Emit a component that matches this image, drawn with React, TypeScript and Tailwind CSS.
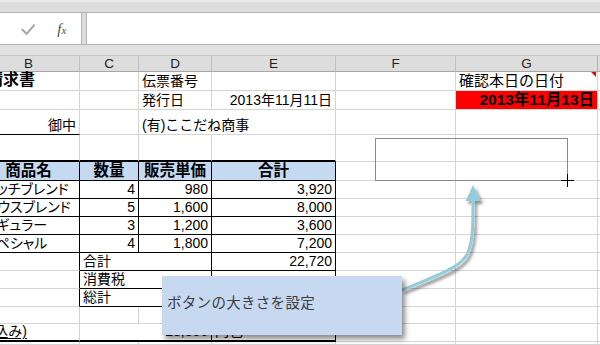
import type {ReactNode} from "react";

type Edge = "g" | "k" | "K" | "n";

const RIGHT: Record<Edge, string> = {
  g: "border-r border-r-[#d4d4d4]",
  k: "border-r border-r-black",
  K: "border-r-2 border-r-black",
  n: "border-r border-r-transparent"
};

const BOTTOM: Record<Edge, string> = {
  g: "border-b border-b-[#d4d4d4]",
  k: "border-b border-b-black",
  K: "border-b-2 border-b-black",
  n: "border-b border-b-transparent"
};

type CellProps = {
  children?: ReactNode;
  r?: Edge;
  b?: Edge;
  className?: string;
};

const Cell = ({children, r = "g", b = "g", className = ""}: CellProps) => (
  <div
    className={`flex min-w-0 items-end whitespace-nowrap px-[3px] pb-[2px] leading-none ${RIGHT[r]} ${BOTTOM[b]} ${className}`}
  >
    {children}
  </div>
);

const Toolbar = () => (
  <div>
    <div className="h-[13px] border-t-2 border-t-[#ebebeb] border-b border-b-[#b3b3b3] bg-[#dddddd]" />
    <div className="flex h-[31px] bg-[#dddddd]">
      <div className="flex w-[82px] items-center border-r border-r-[#b3b3b3] bg-white">
        <svg width="82" height="31" viewBox="0 0 82 31">
          <polyline
            points="22,16 27,21 35,11.5"
            fill="none"
            stroke="#a8a8a8"
            strokeWidth="2"
          />
          <text
            x="58"
            y="21"
            fontFamily="'Liberation Serif', serif"
            fontStyle="italic"
            fontSize="15"
            fill="#4a4a4a"
          >
            f
            <tspan fontSize="11" dy="0">
              x
            </tspan>
          </text>
        </svg>
      </div>
      <div className="w-[4px]" />
      <div className="flex-1 border-l border-l-[#b3b3b3] bg-white" />
    </div>
    <div className="h-[11px] border-t border-t-[#b3b3b3] bg-[#e2e2e2]" />
  </div>
);

const ColumnHeaders = () => (
  <div className="grid h-[17px] grid-cols-[80px_59px_73px_124px_120px_142px_2px] border-t border-t-[#c4c4c4] border-b border-b-[#a6a6a6] bg-[#dddddd] text-[13.5px] leading-none text-[#1e1e1e]">
    <div className="flex items-center justify-center border-r border-r-[#c2c2c2] pr-[22px]">B</div>
    <div className="flex items-center justify-center border-r border-r-[#c2c2c2]">C</div>
    <div className="flex items-center justify-center border-r border-r-[#c2c2c2]">D</div>
    <div className="flex items-center justify-center border-r border-r-[#c2c2c2]">E</div>
    <div className="flex items-center justify-center border-r border-r-[#c2c2c2]">F</div>
    <div className="flex items-center justify-center border-r border-r-[#b0b0b0]">G</div>
    <div />
  </div>
);

type Item = {name: string; qty: string; price: string; total: string};

const items: Item[] = [
  {name: "ダッチブレンド", qty: "4", price: "980", total: "3,920"},
  {name: "ハウスブレンド", qty: "5", price: "1,600", total: "8,000"},
  {name: "レギュラー", qty: "3", price: "1,200", total: "3,600"},
  {name: "スペシャル", qty: "4", price: "1,800", total: "7,200"}
];

const Sheet = () => (
  <div className="grid h-[273px] grid-cols-[80px_59px_73px_124px_120px_142px_2px] grid-rows-[19px_19px_25px_27px_19px_18px_18px_18px_18px_18px_18px_18px_17px_18px_1fr] text-[14px]">
    {/* row 1 */}
    <Cell className="font-bold text-[16px]">
      <span className="-ml-[16px]">請求書</span>
    </Cell>
    <Cell />
    <Cell>伝票番号</Cell>
    <Cell />
    <Cell />
    <Cell className="relative text-[15px]">
      確認本日の日付
      <span className="absolute right-[1px] top-0 h-0 w-0 border-l-[5px] border-l-transparent border-t-[5px] border-t-[#ff0000]" />
    </Cell>
    <Cell r="n" />

    {/* row 2 */}
    <Cell />
    <Cell />
    <Cell>発行日</Cell>
    <Cell className="justify-end">2013年11月11日</Cell>
    <Cell />
    <Cell className="justify-end bg-[#ff0000] text-[15.5px] font-bold">2013年11月13日</Cell>
    <Cell r="n" />

    {/* row 3 */}
    <Cell b="k" className="justify-end">
      御中
    </Cell>
    <Cell />
    <Cell r="n">(有)ここだね商事</Cell>
    <Cell />
    <Cell />
    <Cell />
    <Cell r="n" />

    {/* row 4 */}
    <Cell b="K" />
    <Cell b="K" />
    <Cell b="K" />
    <Cell b="K" />
    <Cell />
    <Cell />
    <Cell r="n" />

    {/* row 5: table header */}
    <Cell r="k" b="k" className="justify-center bg-[#c5d9f1] pr-[25px] text-[15.5px] font-bold">
      商品名
    </Cell>
    <Cell r="k" b="k" className="justify-center bg-[#c5d9f1] text-[15.5px] font-bold">
      数量
    </Cell>
    <Cell r="k" b="k" className="justify-center bg-[#c5d9f1] text-[15.5px] font-bold">
      販売単価
    </Cell>
    <Cell r="k" b="k" className="justify-center bg-[#c5d9f1] text-[15.5px] font-bold">
      合計
    </Cell>
    <Cell />
    <Cell />
    <Cell r="n" />

    {/* rows 6-9 */}
    {items.map((it) => [
      <Cell key={`${it.name}-b`} r="k" b="k">
        <span className="-ml-[19px] [font-feature-settings:'palt']">{it.name}</span>
      </Cell>,
      <Cell key={`${it.name}-c`} r="k" b="k" className="justify-end">
        {it.qty}
      </Cell>,
      <Cell key={`${it.name}-d`} r="k" b="k" className="justify-end">
        {it.price}
      </Cell>,
      <Cell key={`${it.name}-e`} r="k" b="k" className="justify-end">
        {it.total}
      </Cell>,
      <Cell key={`${it.name}-f`} />,
      <Cell key={`${it.name}-g`} />,
      <Cell key={`${it.name}-h`} r="n" />
    ])}

    {/* row 10 */}
    <Cell r="k" />
    <Cell r="k" b="k" className="col-span-2">
      合計
    </Cell>
    <Cell r="k" b="k" className="justify-end">
      22,720
    </Cell>
    <Cell />
    <Cell />
    <Cell r="n" />

    {/* row 11 */}
    <Cell r="k" />
    <Cell r="k" b="k" className="col-span-2">
      消費税
    </Cell>
    <Cell r="k" />
    <Cell />
    <Cell />
    <Cell r="n" />

    {/* row 12 */}
    <Cell r="k" />
    <Cell r="k" b="k" className="col-span-2">
      総計
    </Cell>
    <Cell r="k" />
    <Cell />
    <Cell />
    <Cell r="n" />

    {/* row 13 */}
    <Cell />
    <Cell />
    <Cell r="k" />
    <Cell r="k" />
    <Cell />
    <Cell />
    <Cell r="n" />

    {/* row 14 */}
    <Cell b="K" className="justify-end pr-[52px]">
      <span className="underline underline-offset-2">ご請求金額(税込み)</span>
    </Cell>
    <Cell r="k" b="K" className="col-span-2 justify-end">
      23,856
    </Cell>
    <Cell r="k" b="K">
      円也
    </Cell>
    <Cell />
    <Cell />
    <Cell r="n" />

    {/* row 15 */}
    <Cell />
    <Cell />
    <Cell />
    <Cell />
    <Cell />
    <Cell />
    <Cell r="n" />
  </div>
);

const Arrow = () => (
  <svg
    className="pointer-events-none absolute left-[390px] top-[178px]"
    width="110"
    height="125"
    viewBox="0 0 110 125"
  >
    <defs>
      <filter id="arrowShadow" x="-30%" y="-30%" width="160%" height="160%">
        <feDropShadow dx="2.5" dy="3" stdDeviation="1.6" floodColor="#000" floodOpacity="0.45" />
      </filter>
    </defs>
    <g filter="url(#arrowShadow)">
      <path
        d="M12,112 C45,98 72,90 78,74 C83,62 83,47 83,22"
        fill="none"
        stroke="#93cddd"
        strokeWidth="3"
      />
      <polygon points="83,7 75.5,23 90.5,23" fill="#93cddd" />
    </g>
  </svg>
);

export default function App() {
  return (
    <div className="relative h-[345px] w-[600px] overflow-hidden bg-white font-['Liberation_Sans','Noto_Sans_CJK_JP',sans-serif] text-black">
      <Toolbar />
      <ColumnHeaders />
      <Sheet />

      {/* drawn button outline */}
      <div className="pointer-events-none absolute left-[375px] top-[138px] h-[43px] w-[193px] border border-[#8a8a8a]" />
      {/* crosshair cursor */}
      <div className="pointer-events-none absolute left-[561px] top-[180px] h-px w-[13px] bg-black" />
      <div className="pointer-events-none absolute left-[567px] top-[174px] h-[13px] w-px bg-black" />

      <Arrow />

      {/* callout */}
      <div className="absolute left-[162px] top-[276px] flex h-[59px] w-[240px] items-center bg-[#c6d9f1] pb-[4px] pl-[5px] text-[14.5px] tracking-[0.3px] text-[#3c3c3c] shadow-[3px_4px_5px_rgba(0,0,0,0.45)]">
        ボタンの大きさを設定
      </div>
    </div>
  );
}
